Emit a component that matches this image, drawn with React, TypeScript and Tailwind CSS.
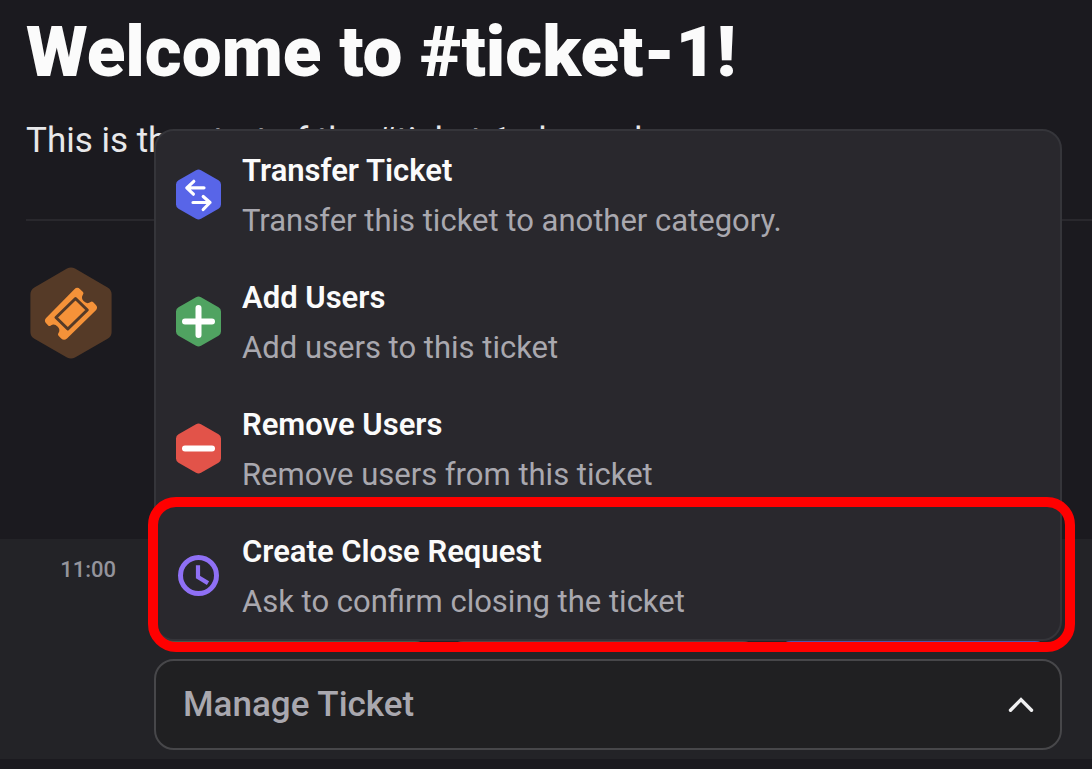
import type { ReactNode } from "react";

type MenuItem = {
  title: string;
  description: string;
  icon: ReactNode;
  highlighted?: boolean;
};

function Hexagon({ className, children }: { className: string; children: ReactNode }) {
  return (
    <svg viewBox="0 0 45 51" className="h-[51px] w-[45px] shrink-0" fill="none" aria-hidden="true">
      <path
        className={className}
        d="M20 1.2a5 5 0 0 1 5 0l17.5 10.1a5 5 0 0 1 2.5 4.3v19.8a5 5 0 0 1-2.5 4.3L25 49.8a5 5 0 0 1-5 0L2.5 39.7A5 5 0 0 1 0 35.4V15.6a5 5 0 0 1 2.5-4.3z"
      />
      {children}
    </svg>
  );
}

const items: MenuItem[] = [
  {
    title: "Transfer Ticket",
    description: "Transfer this ticket to another category.",
    icon: (
      <Hexagon className="fill-[#5865e8]">
        <path
          d="M28 18.8H11M17.8 12.3 10.8 18.8l6.6 6.4M17 33.5h17M27.2 27.5l6.8 6-6.8 7"
          stroke="#fff"
          strokeWidth="3.2"
          strokeLinecap="round"
          strokeLinejoin="round"
        />
      </Hexagon>
    ),
  },
  {
    title: "Add Users",
    description: "Add users to this ticket",
    icon: (
      <Hexagon className="fill-[#50a361]">
        <path d="M9 25.5h27M22.5 12v27" stroke="#fff" strokeWidth="6" strokeLinecap="round" />
      </Hexagon>
    ),
  },
  {
    title: "Remove Users",
    description: "Remove users from this ticket",
    icon: (
      <Hexagon className="fill-[#e25349]">
        <path d="M9 25.5h27" stroke="#fff" strokeWidth="6" strokeLinecap="round" />
      </Hexagon>
    ),
  },
  {
    title: "Create Close Request",
    description: "Ask to confirm closing the ticket",
    highlighted: true,
    icon: (
      <svg viewBox="0 0 45 51" className="h-[51px] w-[45px] shrink-0" fill="none" stroke="#8f70f5" aria-hidden="true">
        <circle cx="22.5" cy="25.5" r="18" strokeWidth="5" />
        <path d="M22 15.3v11.8l10 6" strokeWidth="4.2" />
      </svg>
    ),
  },
];

function TicketAvatar() {
  return (
    <svg viewBox="0 0 82 92" className="h-[92px] w-[82px] shrink-0" fill="none" role="img" aria-label="Ticket bot">
      <path
        fill="#553a27"
        d="M37 1.6a8 8 0 0 1 8 0l32.6 18.8a8 8 0 0 1 4 7v37.4a8 8 0 0 1-4 7L45 90.4a8 8 0 0 1-8 0L4.4 71.8a8 8 0 0 1-4-7V27.4a8 8 0 0 1 4-7z"
      />
      <path
        fill="#f59239"
        d="M44.4 22.2q2.9-2.7 5.7 0l2.9 2.9q1 1.2 0 2.4-2.4 3.6.8 6.8 3.2 3.2 6.8.8 1.2-1 2.4 0l2.9 2.9q2.3 2.6 0 5.3L37 71.5q-3 2.6-5.8 0l-2.7-2.8q-1.2-1.3 0-2.6 2.2-3.5-1-6.7-3.2-3.2-6.7-1-1.3 1-2.6 0l-2.1-2.2q-2.4-2.6 0-5.3z"
      />
      <path d="M45.5 31.5 57.3 43 37.8 62 26 50.5z" stroke="#553a27" strokeWidth="3" strokeLinejoin="round" />
    </svg>
  );
}

function ActionMenu() {
  return (
    <ul
      id="ticket-actions"
      aria-label="Ticket actions"
      className="absolute inset-x-0 bottom-full mb-[18px] rounded-[20px] border-2 border-[#35353a] bg-[#29282d]"
    >
      {items.map((item) => (
        <li key={item.title} className="relative">
          <button type="button" className="flex h-[127px] w-full items-center gap-[21px] px-5 text-left">
            {item.icon}
            <span className="flex min-w-0 flex-col pt-0.5 text-[31px] leading-[50px]">
              <span className="truncate font-semibold text-[#fbfbfb]">{item.title}</span>
              <span className="truncate text-[#a9a8af]">{item.description}</span>
            </span>
          </button>
          {item.highlighted && (
            <span
              aria-hidden="true"
              className="pointer-events-none absolute -top-[15px] -right-[15px] -bottom-[13px] -left-2 rounded-[28px] border-10 border-[#ff0000]"
            />
          )}
        </li>
      ))}
    </ul>
  );
}

export default function App() {
  return (
    <main className="flex min-h-screen flex-col bg-[#1b1a1f] font-[Roboto,sans-serif]">
      <header className="pl-[26px]">
        <h1 className="pt-3 text-[71px] leading-[80px] font-black text-[#fbfbfb]">Welcome to #ticket-1!</h1>
        <p className="mt-[25px] text-[35px] leading-[48px] text-[#e8e8ea]">This is the start of the #ticket-1 channel.</p>
        <div className="mt-[54px] border-t-2 border-[#29282d]" />
      </header>

      <section className="flex h-[318px] px-[30px] pt-[46px]">
        <TicketAvatar />
      </section>

      <section className="flex bg-[#232327] pr-[30px] pb-[9px]">
        <time className="w-[154px] shrink-0 pt-[15px] pr-[38px] text-right text-[22px] leading-8 font-medium text-[#94949c]">
          11:00
        </time>
        <div className="min-w-0 flex-1 pt-[38px]">
          <div aria-hidden="true" className="mb-[17px] flex gap-4 pr-[11px]">
            <span className="h-[65px] flex-[276] rounded-2xl bg-[#46594b]" />
            <span className="h-[65px] flex-[312] rounded-2xl bg-[#5c4346]" />
            <span className="h-[65px] flex-[275] rounded-2xl bg-[#4f56b0]" />
          </div>
          <div className="relative">
            <ActionMenu />
            <button
              type="button"
              aria-haspopup="true"
              aria-expanded="true"
              aria-controls="ticket-actions"
              className="flex h-[91px] w-full items-center justify-between rounded-[20px] border-2 border-[#47474a] bg-[#202022] pr-[26px] pl-[27px]"
            >
              <span className="overflow-hidden text-[35px] leading-9 font-medium text-[#a9a8af]">Manage Ticket</span>
              <svg viewBox="0 0 26 16" className="h-4 w-[26px]" fill="none" aria-hidden="true">
                <path d="M2.5 13.2 13 2.6l10.5 10.6" stroke="#f0f0f1" strokeWidth="3.4" strokeLinecap="round" />
              </svg>
            </button>
          </div>
        </div>
      </section>
    </main>
  );
}
